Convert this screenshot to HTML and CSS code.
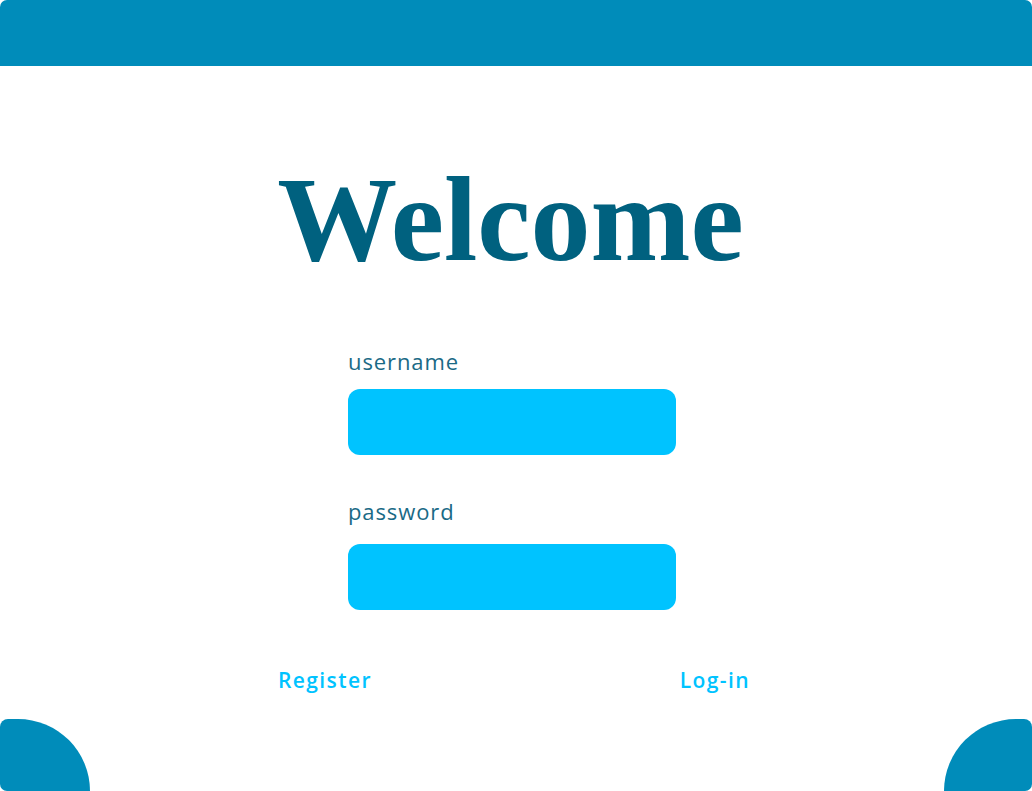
FILE: index.html
```html
<!DOCTYPE html>
<html lang="en">
<head>
<meta charset="utf-8">
<title>Welcome</title>
<link rel="stylesheet" href="styles.css">
</head>
<body>
<div class="page">
  <header class="topbar"></header>
  <main class="content">
    <h1 class="title">Welcome</h1>
    <form class="form">
      <label class="field">
        <span class="label">username</span>
        <input class="input" type="text">
      </label>
      <label class="field field-password">
        <span class="label">password</span>
        <input class="input" type="password">
      </label>
    </form>
    <div class="links">
      <a class="link" href="#">Register</a>
      <a class="link" href="#">Log-in</a>
    </div>
  </main>
  <footer class="bottom">
    <div class="corner corner-left"></div>
    <div class="corner corner-right"></div>
  </footer>
</div>
</body>
</html>
```
FILE: styles.css
```css
* { box-sizing: border-box; }
html, body { margin: 0; padding: 0; background: #ffffff; }
.page {
  width: 1032px;
  height: 791px;
  display: flex;
  flex-direction: column;
  border-radius: 7px;
  overflow: hidden;
  background: #ffffff;
}
.topbar {
  height: 66px;
  flex: none;
  background: #008cba;
}
.content {
  flex: 1;
  display: flex;
  flex-direction: column;
  align-items: center;
}
.title {
  margin: 94px 0 0 -11px;
  font-family: "Liberation Serif", "Times New Roman", serif;
  font-weight: bold;
  font-size: 120px;
  line-height: 120px;
  color: #00617f;
}
.form {
  margin-top: 67px;
  margin-left: -8px;
  width: 328px;
  display: flex;
  flex-direction: column;
  gap: 42px;
}
.field {
  display: flex;
  flex-direction: column;
  gap: 14px;
}
.field-password {
  gap: 19px;
}
.label {
  font-family: "Open Sans", sans-serif;
  font-size: 22px;
  line-height: 28px;
  letter-spacing: 0.9px;
  color: #1a6a86;
}
.input {
  height: 66px;
  border: none;
  border-radius: 12px;
  background: #00c3ff;
  outline: none;
}
.links {
  margin-top: 56px;
  margin-left: -4px;
  width: 472px;
  display: flex;
  justify-content: space-between;
}
.link {
  font-family: "Open Sans", sans-serif;
  font-weight: 600;
  font-size: 21px;
  line-height: 28px;
  letter-spacing: 1.4px;
  color: #00c3ff;
  text-decoration: none;
}
.bottom {
  height: 72px;
  flex: none;
  display: flex;
  justify-content: space-between;
}
.corner {
  width: 90px;
  height: 72px;
  background: #008cba;
}
.corner-left {
  border-radius: 8px 72px 0 0 / 8px 72px 0 0;
}
.corner-right {
  width: 88px;
  border-radius: 72px 8px 0 0 / 72px 8px 0 0;
}
```
